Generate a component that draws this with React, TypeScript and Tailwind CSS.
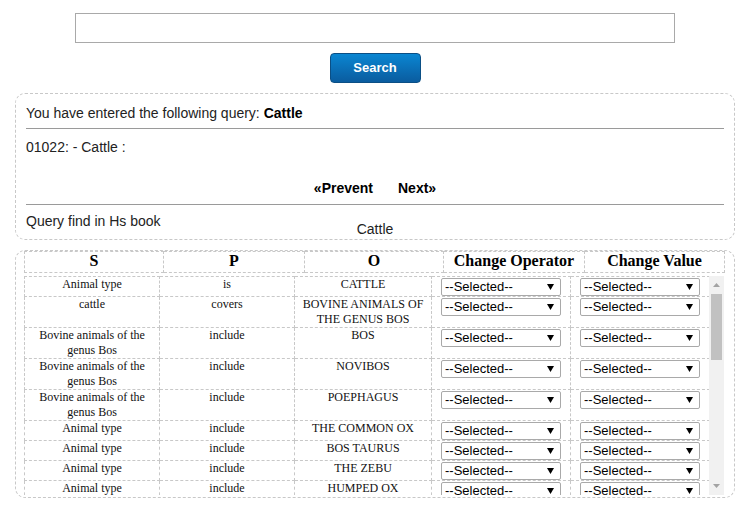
import React from 'react';

const rows: [string, string, string][] = [
  ['Animal type', 'is', 'CATTLE'],
  ['cattle', 'covers', 'BOVINE ANIMALS OF THE GENUS BOS'],
  ['Bovine animals of the genus Bos', 'include', 'BOS'],
  ['Bovine animals of the genus Bos', 'include', 'NOVIBOS'],
  ['Bovine animals of the genus Bos', 'include', 'POEPHAGUS'],
  ['Animal type', 'include', 'THE COMMON OX'],
  ['Animal type', 'include', 'BOS TAURUS'],
  ['Animal type', 'include', 'THE ZEBU'],
  ['Animal type', 'include', 'HUMPED OX'],
];

function FakeSelect() {
  return (
    <div className="relative mx-auto mt-px h-[18px] w-[120px]">
      <select
        className="h-[18px] w-[120px] appearance-none rounded-[2px] border border-[#a9a9a9] bg-white pl-[3px] text-[13px] leading-[16px] text-black outline-none"
        style={{ fontFamily: 'Arial, "Liberation Sans", sans-serif' }}
        defaultValue=""
      >
        <option value="">--Selected--</option>
      </select>
      <svg className="pointer-events-none absolute right-[7px] top-[6px]" width="7" height="6" viewBox="0 0 7 6">
        <path d="M0 0 L7 0 L3.5 6 Z" fill="#000" />
      </svg>
    </div>
  );
}

function Scrollbar() {
  return (
    <div className="relative h-full w-[15px] bg-[#f1f1f1]">
      <svg className="absolute left-[4px] top-[7px]" width="7" height="4" viewBox="0 0 7 4">
        <path d="M0 4 L7 4 L3.5 0 Z" fill="#a3a3a3" />
      </svg>
      <div className="absolute left-[2px] top-[18px] h-[66px] w-[11px] bg-[#c1c1c1]" />
      <svg className="absolute bottom-[7px] left-[4px]" width="7" height="4" viewBox="0 0 7 4">
        <path d="M0 0 L7 0 L3.5 4 Z" fill="#a3a3a3" />
      </svg>
    </div>
  );
}

export default function App() {
  const sans = { fontFamily: '"Liberation Sans", Arial, sans-serif' };
  const serif = { fontFamily: '"Liberation Serif", "Times New Roman", serif' };

  return (
    <div className="min-h-[507px] w-[745px] bg-white text-[#222]" style={sans}>
      <div className="flex flex-col items-center pl-[5px] pt-[13px]">
        <input type="text" className="h-[30px] w-[600px] border border-[#a9a9a9] bg-white px-2 text-[14px] outline-none" />
        <button className="mt-[10px] h-[30px] w-[91px] rounded-[4px] border border-[#0b4f85] bg-gradient-to-b from-[#0a86d2] to-[#0a5c9f] text-[13px] font-bold text-white">
          Search
        </button>
      </div>

      <div className="ml-[15px] mt-[10px] w-[720px] rounded-[10px] border border-dashed border-[#c8c8c8] px-[10px] pb-px pt-[10px] text-[14px] leading-[18px]">
        <div>
          You have entered the following query: <b className="text-black">Cattle</b>
        </div>
        <div className="mt-[6px] border-t border-[#9a9a9a]" />
        <div className="mt-[9px]">01022: - Cattle :</div>
        <div className="mt-[23px] flex justify-center gap-[25px] font-bold text-black">
          <a>«Prevent</a>
          <a>Next»</a>
        </div>
        <div className="mt-[7px] border-t border-[#9a9a9a]" />
        <div className="mt-[7px]">Query find in Hs book</div>
        <div className="-mt-[10px] text-center">Cattle</div>
      </div>

      <div className="ml-[15px] mt-[10px] w-[720px] rounded-[10px] border border-dashed border-[#c8c8c8] pb-[2px] pl-[8px]" style={serif}>
        <table className="w-[700px] table-fixed border-collapse text-black">
          <colgroup>
            <col className="w-[139px]" />
            <col className="w-[141px]" />
            <col className="w-[139px]" />
            <col className="w-[141px]" />
            <col className="w-[140px]" />
          </colgroup>
          <thead>
            <tr className="h-[21px] text-[16px] leading-[18px]">
              {['S', 'P', 'O', 'Change Operator', 'Change Value'].map((h) => (
                <th key={h} className="border border-dashed border-[#c8c8c8] px-0 pb-[2px] pt-0 font-bold">
                  {h}
                </th>
              ))}
            </tr>
          </thead>
        </table>

        <div className="mt-[3px] flex h-[219px] w-[700px]">
          <div className="h-full w-[685px] overflow-hidden">
            <table className="w-[685px] table-fixed border-collapse text-[12px] leading-[15px] text-[#111]">
              <colgroup>
                <col className="w-[135px]" />
                <col className="w-[135px]" />
                <col className="w-[137px]" />
                <col className="w-[139px]" />
                <col className="w-[139px]" />
              </colgroup>
              <tbody>
                {rows.map((r, i) => (
                  <tr key={i}>
                    <td className="border border-dashed border-[#c8c8c8] px-[2px] py-0 text-center align-top">{r[0]}</td>
                    <td className="border border-dashed border-[#c8c8c8] px-[2px] py-0 text-center align-top">{r[1]}</td>
                    <td className="border border-dashed border-[#c8c8c8] px-[2px] py-0 text-center align-top">{r[2]}</td>
                    <td className="border border-dashed border-[#c8c8c8] p-0 align-top">
                      <FakeSelect />
                    </td>
                    <td className="border border-dashed border-[#c8c8c8] p-0 align-top">
                      <FakeSelect />
                    </td>
                  </tr>
                ))}
              </tbody>
            </table>
          </div>
          <Scrollbar />
        </div>
      </div>
    </div>
  );
}
